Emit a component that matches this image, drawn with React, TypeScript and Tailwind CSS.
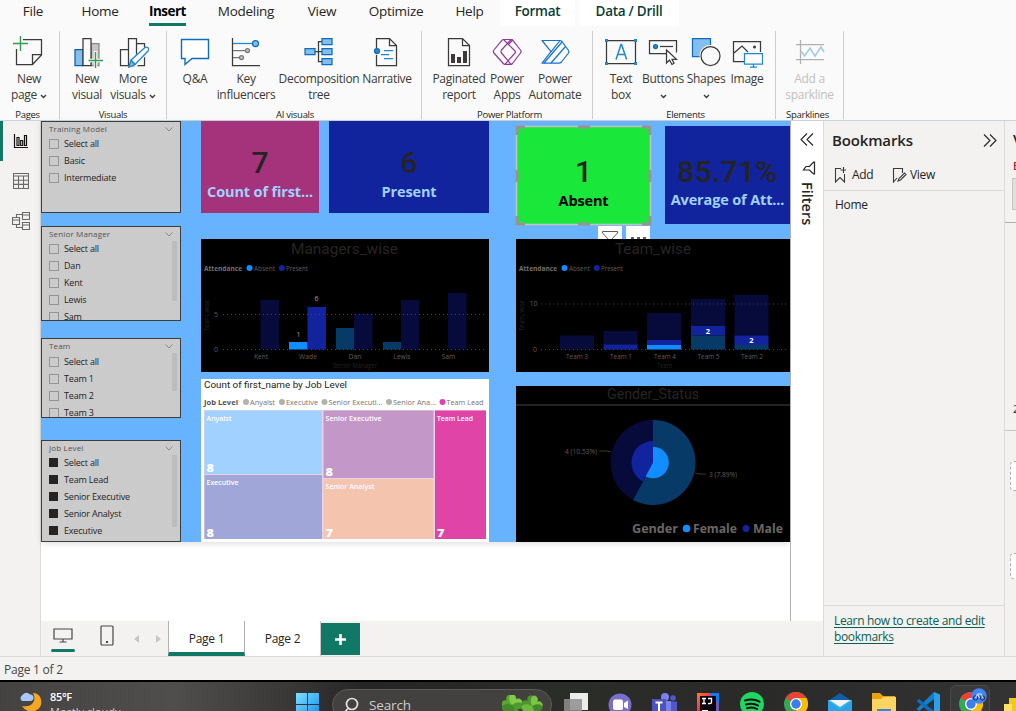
import React from "react";
import type { ReactNode } from "react";

const SANS = "'Open Sans', 'Noto Sans', sans-serif";
const DIN = "Roboto, 'Open Sans', sans-serif";

/* ---------- Shared chart text ---------- */

type LabelProps = {
  x: number;
  y: number;
  w?: number;
  size: number;
  fill: string;
  weight?: number;
  font?: string;
  anchor?: "start" | "middle" | "end";
  children: string;
};

function Label({ x, y, w, size, fill, weight = 400, font = SANS, anchor = "start", children }: LabelProps) {
  return (
    <text
      x={x}
      y={y}
      fontSize={size}
      fill={fill}
      fontWeight={weight}
      fontFamily={font}
      textAnchor={anchor}
      textLength={w}
      lengthAdjust="spacingAndGlyphs"
    >
      {children}
    </text>
  );
}

function ChevronDown({ className = "" }: { className?: string }) {
  return (
    <svg width="7" height="5" viewBox="0 0 7 5" className={className} fill="none" stroke="currentColor" strokeWidth="1.4">
      <path d="M1 1l2.5 2.5L6 1" />
    </svg>
  );
}

/* ---------- Ribbon tabs ---------- */

const tabs = [
  { name: "File", cls: "w-[66px]" },
  { name: "Home", cls: "w-[68px]" },
  { name: "Insert", cls: "w-[67px]", active: true },
  { name: "Modeling", cls: "w-[90px]" },
  { name: "View", cls: "w-[62px]" },
  { name: "Optimize", cls: "w-[86px]" },
  { name: "Help", cls: "w-[61px]" },
  { name: "Format", cls: "w-[75px] bg-white font-semibold text-[#0c3b37]" },
  { name: "Data / Drill", cls: "ml-1 w-[100px] bg-white font-semibold text-[#0c3b37]" },
];

function TabBar() {
  return (
    <nav className="flex h-[26px] shrink-0 text-[13.5px] leading-[23px] tracking-[-0.02em] text-[#252423]">
      {tabs.map((t) => (
        <div key={t.name} className={`flex flex-col items-center ${t.cls}`}>
          <span className={t.active ? "h-[26px] border-b-3 border-[#117865] font-bold tracking-[-0.04em] text-black" : ""}>{t.name}</span>
        </div>
      ))}
    </nav>
  );
}

/* ---------- Ribbon icons ---------- */

const ink = "#3b3a39";
const blue = "#0f6cbd";
const pale = "#83beec";
const grey = "#c8c6c4";

function Icon({ children, w = 32 }: { children: ReactNode; w?: number }) {
  return (
    <svg width={w} height="34" viewBox={`0 0 ${w} 34`} fill="none" stroke={ink} strokeWidth="1.25" className="shrink-0">
      {children}
    </svg>
  );
}

const icons = {
  newPage: (
    <Icon>
      <path d="M10 5.500h18.500v15.500L19.500 30.500H3.500V15M28.500 20.500h-9v10" />
      <path d="M7.500 2v15M0 9.500h15" stroke="#2f9e4c" strokeWidth="1.4" />
    </Icon>
  ),
  newVisual: (
    <Icon>
      <path d="M4 15.500h8v16H4z" fill={pale} stroke="#0f5ea8" />
      <path d="M20 9.500h8v22h-8z" fill={grey} stroke="#8a8886" />
      <path d="M12 4.500h8v27h-8z" fill="#fafafa" />
      <path d="M24.500 17v19M16 26.500h17" stroke="#fafafa" strokeWidth="3.500" />
      <path d="M24.500 18v16M17.500 26.500h15" stroke="#2f9e4c" strokeWidth="1.4" />
    </Icon>
  ),
  moreVisuals: (
    <Icon>
      <path d="M3.500 15.500h8v16h-8zM11.500 4.500h8v27h-8zM19.500 9.500h8v22h-8z" />
      <path d="M29 15 16 31" stroke="#fafafa" strokeWidth="8" />
      <path d="M14 26 27.500 14c3-2.200 5.500.8 3.300 3.300L18 30.500l-6 2.500z" fill="#fafafa" stroke="#1f86d0" />
      <path d="M14 26.500l-2 6.500 6-2.500z" fill={pale} stroke="#1f86d0" />
      <path d="M14 26l4 4.500" stroke="#1f86d0" />
    </Icon>
  ),
  qa: (
    <Icon>
      <path d="M2.500 5.500h27v19H13l-7 6v-6H2.500z" stroke={blue} strokeWidth="1.4" fill="#fff" />
    </Icon>
  ),
  key: (
    <Icon>
      <path d="M2.500 4v27.500H30" />
      <path d="M3 9.500h19" stroke="#1f86d0" />
      <path d="M3 16.500h12M3 23.500h7" stroke="#797775" />
      <circle cx="25.500" cy="9.500" r="3" fill={pale} stroke={blue} />
      <circle cx="17.500" cy="16.500" r="2" fill={grey} stroke="#797775" />
      <circle cx="11.500" cy="23.500" r="2" fill={grey} stroke="#797775" />
    </Icon>
  ),
  tree: (
    <Icon>
      <path d="M12 17.500h8M19 7.500h-3.500v20H19" />
      <path d="M2 14.500h10v6H2zM19 4.500h10v6H19zM19 14.500h10v6H19zM19 24.500h10v6H19z" fill={pale} stroke={blue} />
    </Icon>
  ),
  narrative: (
    <Icon>
      <path d="M5.500 14V4.500h13l7 7v20h-20V21M18.500 4.500v7h7" />
      <circle cx="6" cy="17" r="2.500" fill="#2a8ad4" stroke={blue} />
      <path d="M13 16.500h9M10 20.500h8M13 24.500h9" stroke="#1f86d0" />
    </Icon>
  ),
  paginated: (
    <Icon>
      <path d="M5.500 4.500h14l7 7v20h-21zM19.500 4.500v7h7" />
      <path d="M8 20h4v9H8zM14 23h4v6h-4zM20 17h4v12h-4z" fill={ink} stroke="none" />
    </Icon>
  ),
  apps: (
    <Icon>
      <g stroke="#8c3a9c" strokeWidth="1.200" strokeLinejoin="round">
        <path d="M12.500 5.500h7.500q1 0 1.800.8L29.500 16q1.200 1.500 0 3l-8 10.500q-.7.800-1.500.8h-6q-1 0-1.700-.8L2.900 19q-1.200-1.500 0-3l8-9.700q.7-.8 1.600-.8z" />
        <path d="M12.500 5.500 24 17q1 1 0 2L14 30.300M20 5.500 10.500 16q-1 1.500 0 3L20 30.300M17 11l5-5.500" />
      </g>
    </Icon>
  ),
  automate: (
    <Icon>
      <g stroke="#1272cf" strokeWidth="1.200" strokeLinejoin="round">
        <path d="M3 6.500h17.500q1.500 0 2.500 1l6.500 9q1 1.500 0 2.500l-7 9q-1 1.200-2.500 1.200H3l9-11.500z" />
        <path d="M12 17.800 21 6.500M5 29 23 8M12 29 26.500 12.500" />
      </g>
    </Icon>
  ),
  textBox: (
    <Icon>
      <path d="M1.500 6.500h29v23h-29z" />
      <path d="M11 25.500l5-15h.6l5 15M12.800 20.500h7" stroke="#1f86d0" strokeWidth="1.500" />
      <path d="M0 5h3v3H0zM29 5h3v3h-3zM0 28h3v3H0zM29 28h3v3h-3z" fill="#1f86d0" stroke="none" />
    </Icon>
  ),
  buttons: (
    <Icon>
      <path d="M19 19.500H2.500v-13h27v12" />
      <circle cx="8.500" cy="12.500" r="2" fill="#2a8ad4" stroke={blue} />
      <path d="M13 12.500h13" />
      <path d="M19.500 16v13l3-3 2.500 4.500 2-1.200-2-4h4.500z" fill="#fff" />
    </Icon>
  ),
  shapes: (
    <Icon>
      <path d="M2.500 4.500h18v18h-18z" fill={pale} stroke={blue} />
      <circle cx="20.500" cy="22" r="11" fill="#fafafa" stroke="none" />
      <circle cx="20.500" cy="22" r="9.500" fill="#fafafa" />
    </Icon>
  ),
  image: (
    <Icon>
      <path d="M13 27.500H2.500v-20h27V18M3 19l8-7 6 6" />
      <circle cx="23.500" cy="13" r="1.500" fill={ink} stroke="none" />
      <path d="M13.500 19.500h18v10.500h-18zM22.500 30v3M19 33h7" stroke="#1f86d0" fill="#fff" />
    </Icon>
  ),
  sparkline: (
    <Icon>
      <path d="M2 10.500h28M2 25.500h28M6.500 6v24" stroke="#b3b1af" />
      <path d="M7 17l3.500 5 5.500-8 5 8 6-9 3 5" stroke="#a3cbe4" strokeWidth="1.500" />
    </Icon>
  ),
};

/* ---------- Ribbon ---------- */

type Cmd = { icon: ReactNode; a: string; b?: string; chev?: boolean; cls: string };

function Command({ icon, a, b, chev, cls }: Cmd) {
  return (
    <div className={`flex flex-col items-center whitespace-nowrap text-[12px] leading-4 tracking-[-0.025em] ${cls}`}>
      {icon}
      <span className="mt-[3px]">{a}</span>
      <span className="flex h-4 items-center gap-[3px]">
        {b}
        {chev && <ChevronDown className="mt-0.5" />}
      </span>
    </div>
  );
}

const groups: { label: string; cls: string; items: Cmd[] }[] = [
  { label: "Pages", cls: "w-[60px]", items: [{ icon: icons.newPage, a: "New", b: "page", chev: true, cls: "w-[58px]" }] },
  {
    label: "Visuals",
    cls: "w-[107px] pl-1",
    items: [
      { icon: icons.newVisual, a: "New", b: "visual", cls: "w-[46px]" },
      { icon: icons.moreVisuals, a: "More", b: "visuals", chev: true, cls: "w-[46px]" },
    ],
  },
  {
    label: "AI visuals",
    cls: "w-[255px] pl-1.5",
    items: [
      { icon: icons.qa, a: "Q&A", cls: "w-[44px]" },
      { icon: icons.key, a: "Key", b: "influencers", cls: "w-[58px]" },
      { icon: icons.tree, a: "Decomposition", b: "tree", cls: "w-[88px]" },
      { icon: icons.narrative, a: "Narrative", cls: "w-[48px]" },
    ],
  },
  {
    label: "Power Platform",
    cls: "w-[171px] pl-[9px]",
    items: [
      { icon: icons.paginated, a: "Paginated", b: "report", cls: "w-[56px]" },
      { icon: icons.apps, a: "Power", b: "Apps", cls: "w-[40px]" },
      { icon: icons.automate, a: "Power", b: "Automate", cls: "w-[56px]" },
    ],
  },
  {
    label: "Elements",
    cls: "w-[183px] pl-[7px]",
    items: [
      { icon: icons.textBox, a: "Text", b: "box", cls: "w-[42px]" },
      { icon: icons.buttons, a: "Buttons", chev: true, cls: "w-[42px]" },
      { icon: icons.shapes, a: "Shapes", chev: true, cls: "w-[44px]" },
      { icon: icons.image, a: "Image", cls: "w-[38px]" },
    ],
  },
  {
    label: "Sparklines",
    cls: "w-[68px]",
    items: [{ icon: icons.sparkline, a: "Add a", b: "sparkline", cls: "w-[67px] text-[#c2c0be]" }],
  },
];

function Ribbon() {
  return (
    <div className="flex h-[95px] shrink-0 pt-[5px] text-[#3b3a39]">
      {groups.map((g) => (
        <div key={g.label} className={`flex h-[88px] flex-col border-r border-[#d0cecc] ${g.cls}`}>
          <div className="flex h-[77px] shrink-0 pt-[3px]">{g.items.map((it, i) => <Command key={i} {...it} />)}</div>
          <div className="-ml-1 text-center text-[9.5px] leading-[14px] tracking-[-0.03em] text-[#252423]">{g.label}</div>
        </div>
      ))}
    </div>
  );
}

/* ---------- Left rail ---------- */

function Rail() {
  return (
    <aside className="flex w-[41px] shrink-0 flex-col border-r border-[#dddbd9] bg-[#f3f2f1]">
      <div className="flex h-10 items-center border-l-3 border-[#117865] pl-[10px]">
        <svg width="16" height="16" viewBox="0 0 16 16" fill="none" stroke="#111" strokeWidth="1.200">
          <path d="M1.500 1v13.500H15M4 4.500h2v8H4zM7.700 7.500h2v5h-2zM11.500 2.500h2v10h-2z" />
        </svg>
      </div>
      <div className="flex h-10 items-center pl-[13px]">
        <svg width="16" height="16" viewBox="0 0 16 16" fill="none" stroke="#6b6967" strokeWidth="1.100">
          <path d="M.5.500h15v15H.500zM.5 3h15M.5 7.200h15M.5 11.400h15M5.500 3v12.500M10.500 3v12.500" />
        </svg>
      </div>
      <div className="flex h-10 items-center pl-3">
        <svg width="18" height="18" viewBox="0 0 18 18" fill="none" stroke="#6b6967" strokeWidth="1.100">
          <path d="M.5 5.500h7v7h-7zM.5 8h7M10.500.500h7v7h-7zM10.500 3h7M10.500 10.500h7v7h-7zM10.500 13h7M4.500 5.500v-3h6M4.500 12.500v3h6" />
        </svg>
      </div>
    </aside>
  );
}

/* ---------- Slicers ---------- */

type SlicerProps = { title: string; items: string[]; cls: string; head: string; checked?: boolean; thumb?: string };

function Slicer({ title, items, cls, head, checked, thumb }: SlicerProps) {
  return (
    <section className={`relative w-[140px] shrink-0 overflow-hidden border border-[#3d3d3d] bg-[#cbcbcb] pl-[7px] ${cls}`}>
      <div className={`flex items-start justify-between pr-[7px] ${head}`}>
        <span className="text-[8px] leading-[14px] tracking-[0.02em] text-[#55524f]">{title}</span>
        <svg width="8" height="5" viewBox="0 0 8 5" fill="none" stroke="#8a8886" className="mt-[5px]">
          <path d="M.5.500 4 4 7.500.500" />
        </svg>
      </div>
      <ul className="text-[9px] leading-[17px] tracking-[-0.02em] text-[#252423]">
        {items.map((n) => (
          <li key={n} className="flex h-[17px] items-center gap-[5px] whitespace-nowrap">
            <i className={checked ? "size-[9px] bg-[#252423]" : "size-[10px] border border-[#979593]"} />
            <span className={checked ? "pl-px" : ""}>{n}</span>
          </li>
        ))}
      </ul>
      {thumb && <div className={`absolute right-[3px] top-[14px] w-[5px] bg-[#bdbcbb] ${thumb}`} />}
    </section>
  );
}

/* ---------- Cards ---------- */

function Card({ value, label, cls, num = "", text }: { value: string; label: string; cls: string; num?: string; text: string }) {
  return (
    <section className={`flex shrink-0 flex-col items-center overflow-hidden whitespace-nowrap ${cls}`}>
      <div className={`font-[Roboto] text-[30px] font-medium leading-9 text-[#252423] ${num}`}>{value}</div>
      <div className={`text-[14.5px] font-bold leading-5 tracking-[-0.01em] ${text}`}>{label}</div>
    </section>
  );
}

function SelectedFrame() {
  return (
    <svg width="137" height="101" viewBox="0 0 137 101" className="absolute -left-px -top-px" fill="none">
      <rect x="1.500" y="1.500" width="134" height="98" stroke="#c4c2c0" strokeWidth="1.500" />
      <path
        d="M2 10V2h8M127 2h8v8M135 91v8h-8M10 99H2v-8M63 2h12M63 99h12M2 45v12M135 45v12"
        stroke="#969492"
        strokeWidth="3"
      />
    </svg>
  );
}

/* ---------- Charts ---------- */

const NAVY = "#060b3c";
const TEAL = "#083a68";
const BRIGHT = "#118dff";
const ROYAL = "#12239e";
const DIM = "#605c59";

function Legend({ x }: { x: number }) {
  return (
    <g>
      <Label x={x} y={271} w={38} size={7} fill="#76716d" weight={700}>Attendance</Label>
      <circle cx={x + 45.5} cy={268} r={3} fill={BRIGHT} />
      <Label x={x + 50} y={271} w={21} size={7} fill={DIM}>Absent</Label>
      <circle cx={x + 77.8} cy={268} r={3} fill={ROYAL} />
      <Label x={x + 82} y={271} w={22} size={7} fill={DIM}>Present</Label>
    </g>
  );
}

function ManagersChart() {
  const bars: [number, number, string][] = [
    [260.5, 300, NAVY], [289, 342, BRIGHT], [307.500, 307, ROYAL], [336, 328, TEAL], [354, 314, NAVY],
    [383, 342, TEAL], [401, 300, NAVY], [448, 293, NAVY],
  ];
  const cats: [string, number, number][] = [["Kent", 261, 14], ["Wade", 308, 18], ["Dan", 355, 13], ["Lewis", 402, 17], ["Sam", 448.5, 14]];
  return (
    <svg width="288" height="133" viewBox="201 239 288 133" className="block shrink-0 bg-black">
      <Label x={291} y={253.900} w={107} size={14.200} fill="#272523" font={DIN}>Managers_wise</Label>
      <Legend x={204} />
      {bars.map(([x, y, c]) => <rect key={x} x={x} y={y} width={18.500} height={349.500 - y} fill={c} />)}
      <path d="M223 314.500h262M223 349.500h262" stroke="#494644" strokeDasharray="1 3" />
      <Label x={214} y={316.500} size={7} fill={DIM}>5</Label>
      <Label x={214} y={352} size={7} fill={DIM}>0</Label>
      <Label x={298.500} y={337} size={7} fill="#a5a19e" anchor="middle">1</Label>
      <Label x={316.500} y={301} size={7} fill="#a5a19e" anchor="middle">6</Label>
      {cats.map(([n, x, w]) => <Label key={n} x={x} y={359} w={w} size={7} fill={DIM} anchor="middle">{n}</Label>)}
      <Label x={333} y={368} w={44} size={6.500} fill="#262422">Senior Manager</Label>
      <g transform="rotate(-90 209 331)"><Label x={209} y={331} w={31} size={6.500} fill="#262422">Team_wise</Label></g>
    </svg>
  );
}

function TeamChart() {
  const bars: [number, number, number, string][] = [
    [560, 335.5, 349.5, NAVY], [603.5, 331, 344.5, NAVY], [603.5, 344.5, 349.5, ROYAL],
    [647, 313, 340, NAVY], [647, 340, 345, ROYAL], [647, 345, 349.5, BRIGHT],
    [691, 299, 326, NAVY], [691, 326, 335.5, ROYAL], [691, 335.5, 349.5, TEAL],
    [734.500, 295, 335.5, NAVY], [734.500, 335.5, 345, ROYAL], [734.500, 345, 349.5, TEAL],
  ];
  const cats: [string, number][] = [["Team 3", 577], ["Team 1", 621], ["Team 4", 665], ["Team 5", 708.5], ["Team 2", 752]];
  return (
    <svg width="274" height="133" viewBox="516 239 274 133" className="block shrink-0 bg-black">
      <Label x={615} y={253.900} w={76} size={14.200} fill="#272523" font={DIN}>Team_wise</Label>
      <Legend x={519} />
      {bars.map(([x, a, b, c], i) => <rect key={i} x={x} y={a} width={34} height={b - a} fill={c} />)}
      <path d="M541 304h245M541 349.500h245" stroke="#494644" strokeDasharray="1 3" />
      <Label x={529.500} y={306} size={7} fill={DIM}>10</Label>
      <Label x={533} y={352} size={7} fill={DIM}>0</Label>
      <Label x={708} y={334} size={7.500} fill="#fff" weight={700} anchor="middle">2</Label>
      <Label x={751.500} y={343} size={7.500} fill="#fff" weight={700} anchor="middle">2</Label>
      {cats.map(([n, x]) => <Label key={n} x={x} y={359} w={22} size={7} fill={DIM} anchor="middle">{n}</Label>)}
      <Label x={657} y={368} w={15} size={6.500} fill="#262422">Team</Label>
      <g transform="rotate(-90 524 331)"><Label x={524} y={331} w={31} size={6.500} fill="#262422">Team_wise</Label></g>
    </svg>
  );
}

function slice(r: number, female: boolean) {
  const a = (208 * Math.PI) / 180;
  const ex = 653 + r * Math.sin(a);
  const ey = 462.5 - r * Math.cos(a);
  return female
    ? `M653 462.5V${462.5 - r}A${r} ${r} 0 1 1 ${ex} ${ey}Z`
    : `M653 462.5L${ex} ${ey}A${r} ${r} 0 0 1 653 ${462.5 - r}Z`;
}

function GenderChart() {
  return (
    <svg width="274" height="156" viewBox="516 386 274 156" className="block shrink-0 bg-black">
      <Label x={607} y={399} w={92} size={14.200} fill="#272523" font={DIN}>Gender_Status</Label>
      <path d="M516 405h274" stroke="#222" strokeWidth="2" />
      <path d={slice(42.500, true)} fill={TEAL} />
      <path d={slice(42.500, false)} fill={NAVY} />
      <path d={slice(21.500, false)} fill={ROYAL} />
      <path d={slice(15.800, true)} fill={BRIGHT} />
      <path d="M599 451h8l4 1M695 473l4 1h7" stroke="#3a3836" fill="none" />
      <Label x={565} y={454} w={32} size={7} fill={DIM}>4 (10.53%)</Label>
      <Label x={709} y={477} w={28} size={7} fill={DIM}>3 (7.89%)</Label>
      <Label x={632} y={533} w={46} size={13} fill="#6a6663" weight={700}>Gender</Label>
      <circle cx={686.500} cy={528.500} r={3.800} fill={BRIGHT} />
      <Label x={693} y={533} w={44} size={13} fill="#6a6663" weight={700}>Female</Label>
      <circle cx={746} cy={528.500} r={3.500} fill={ROYAL} />
      <Label x={753} y={533} w={30} size={13} fill="#6a6663" weight={700}>Male</Label>
    </svg>
  );
}

function Treemap() {
  const cells: [string, number, number, number, number, number, string, number, string][] = [
    ["Anyalst", 204, 410, 118, 64, 25, "#a0d1ff", 8, "a"],
    ["Executive", 204, 474.500, 118, 64.500, 32, "#a0a7d8", 8, "b"],
    ["Senior Executive", 323, 410, 110.500, 68, 56, "#c497c9", 8, "c"],
    ["Senior Analyst", 323, 478.500, 110.500, 60.500, 49, "#f5c4af", 7, "d"],
    ["Team Lead", 434.500, 410, 51.500, 129, 36, "#e044a7", 7, "e"],
  ];
  const legend: [string, number, number][] = [
    ["Anyalst", 250, 25], ["Executive", 286, 32], ["Senior Executi...", 328.5, 54], ["Senior Ana...", 393, 43], ["Team Lead", 446.5, 37],
  ];
  return (
    <svg width="288" height="163" viewBox="201 379 288 163" className="block shrink-0 bg-white">
      <Label x={204} y={388} w={143} size={9.500} fill="#252423" font={DIN}>Count of first_name by Job Level</Label>
      <Label x={204} y={405} w={34} size={7.500} fill="#55524f" weight={700}>Job Level</Label>
      {legend.map(([n, x, w], i) => (
        <g key={n}>
          <circle cx={x - 4} cy={402} r={3} fill={i === 4 ? "#e044a7" : "#b3b0ad"} />
          <Label x={x} y={405} w={w} size={7.500} fill="#77736f">{n}</Label>
        </g>
      ))}
      <rect x="204" y="410" width="282" height="129" fill="#e8d3ea" />
      {cells.map(([n, x, y, w, h, tw, c, v, k]) => (
        <g key={k}>
          <rect x={x + 0.5} y={y + 0.5} width={w - 0.5} height={h - 0.5} fill={c} />
          <Label x={x + 2.500} y={y + 10.700} w={tw} size={7.500} fill="#fff" weight={600}>{n}</Label>
          <Label x={x + 2.500} y={y + h - 2.500} w={7.500} size={11} fill="#fff" weight={800}>{String(v)}</Label>
        </g>
      ))}
    </svg>
  );
}

/* ---------- Report canvas ---------- */

function Report() {
  return (
    <div className="flex h-[421px] shrink-0 bg-[#68b3ff] shadow-[0_2px_6px_#0000001f]">
      <div className="flex w-[140px] flex-col">
        <Slicer title="Training Model" items={["Select all", "Basic", "Intermediate"]} cls="h-[92px]" head="h-[13px]" />
        <Slicer title="Senior Manager" items={["Select all", "Dan", "Kent", "Lewis", "Sam"]} cls="mt-[13px] h-[95px]" head="h-[13px]" thumb="h-[60px]" />
        <Slicer title="Team" items={["Select all", "Team 1", "Team 2", "Team 3"]} cls="mt-[17px] h-[80px]" head="h-[14px]" thumb="h-[38px]" />
        <Slicer title="Job Level" items={["Select all", "Team Lead", "Senior Executive", "Senior Analyst", "Executive"]} cls="mt-[22px] h-[102px]" head="h-[13px]" checked thumb="h-[72px]" />
      </div>
      <div className="ml-5 flex w-[288px] flex-col">
        <div className="flex justify-between">
          <Card value="7" label="Count of first..." cls="h-[92px] w-[118px] bg-[#a4337b] pt-6" text="mt-px text-[#a0d1ff]" />
          <Card value="6" label="Present" cls="h-[92px] w-[160px] bg-[#12239e] pt-6" text="mt-px text-[#a0d1ff]" />
        </div>
        <div className="mt-[26px]"><ManagersChart /></div>
        <div className="mt-[7px]"><Treemap /></div>
      </div>
      <div className="ml-[27px] flex w-[274px] flex-col">
        <div className="flex justify-between pt-[5px]">
          <div className="relative">
            <Card value="1" label="Absent" cls="h-[99px] w-[135px] bg-[#19e73a] pt-7" text="mt-px text-black" />
            <SelectedFrame />
          </div>
          <Card value="85.71%" label="Average of Att..." cls="h-[98px] w-[125px] bg-[#12239e] pt-7" num="tracking-[0.01em]" text="mt-0 text-[#a0d1ff]" />
        </div>
        <div className="flex h-[14px] gap-1 pl-[82px] pt-px">
          <div className="flex w-6 justify-center overflow-hidden bg-white">
            <svg width="18" height="14" viewBox="0 0 18 14" fill="none" stroke="#605e5c"><path d="M1.500 5.500h15v1.500l-6 6.500M1.500 5.500V7l6 6.500" /></svg>
          </div>
          <div className="flex w-6 items-end justify-center gap-[3px] bg-white">
            <i className="h-[2px] w-[3px] bg-[#605e5c]" /><i className="h-[2px] w-[3px] bg-[#605e5c]" /><i className="h-[2px] w-[3px] bg-[#605e5c]" />
          </div>
        </div>
        <TeamChart />
        <div className="mt-[14px]"><GenderChart /></div>
      </div>
    </div>
  );
}

/* ---------- Right panes ---------- */

function FiltersPane() {
  return (
    <aside className="flex w-[33px] shrink-0 flex-col items-center border-l border-[#b3b0ad] bg-white pt-[12px]">
      <svg width="14" height="13" viewBox="0 0 14 13" fill="none" stroke="#252423" strokeWidth="1.100"><path d="M7 .5l-6 6 6 6M13 .5l-6 6 6 6" /></svg>
      <svg width="14" height="14" viewBox="0 0 14 14" fill="none" stroke="#252423" strokeWidth="1.200" className="mt-[15px] ml-1"><path d="M12.500 1v12h-1L7.500 9H1.500L4 5.500h3.500l4-4.500z" /></svg>
      <span className="mt-[7px] text-[14.5px] font-semibold leading-4 tracking-[0] text-[#252423] [writing-mode:vertical-rl]">Filters</span>
    </aside>
  );
}

function BookmarkIcon({ edit }: { edit?: boolean }) {
  return (
    <svg width={edit ? 15 : 12} height="16" viewBox={edit ? "0 0 15 16" : "0 0 12 16"} fill="none" stroke="#3b3a39" strokeWidth="1.100">
      {edit ? <path d="M5 11 1.500 15V1.500h9V6M14 7.500l-5.500 5.500-2.500 1 1-2.500L12.500 6z" /> : <path d="M7 1.500H1.500V15L6 10.500l4.500 4.500V7M9.500 0v6M6.500 3h5.500" />}
    </svg>
  );
}

function BookmarksPane() {
  return (
    <aside className="flex w-[182px] shrink-0 flex-col border-x border-[#dddbd9] bg-[#f3f2f1] text-[12px] tracking-[-0.025em] text-[#252423]">
      <div className="flex h-10 items-center justify-between pb-[2px] pl-2 pr-[7px]">
        <h2 className="text-[15px] font-semibold tracking-[-0.01em]">Bookmarks</h2>
        <svg width="14" height="13" viewBox="0 0 14 13" fill="none" stroke="#252423" strokeWidth="1.100"><path d="M1 .5l6 6-6 6M7 .5l6 6-6 6" /></svg>
      </div>
      <div className="flex h-[30px] items-center border-b border-[#dddbd9] pb-[2px] pl-[10px]">
        <BookmarkIcon /><span className="ml-[6px] w-[40px]">Add</span>
        <BookmarkIcon edit /><span className="ml-[3px]">View</span>
      </div>
      <div className="flex-1 pl-[11px] pt-[5px] leading-[18px]">Home</div>
      <div className="h-[51px] border-t border-[#dddbd9] pl-[10px] pt-[7px] leading-4 tracking-[-0.03em]">
        <a className="text-[#0c5e52] underline underline-offset-2">Learn how to create and edit<br />bookmarks</a>
      </div>
    </aside>
  );
}

function EdgePane() {
  return (
    <aside className="flex w-[11px] shrink-0 flex-col overflow-hidden bg-[#f3f2f1] pl-[8px]">
      <span className="mt-[8px] text-[15px] font-semibold leading-5 text-[#252423]">V</span>
      <span className="mt-[9px] text-[11px] font-semibold leading-4 text-[#a4262c]">B</span>
      <i className="-ml-px mt-[4px] h-8 w-4 shrink-0 border border-[#c8c6c4] bg-[#e1dfdd]" />
      <i className="-ml-2 mt-[12px] h-px w-5 shrink-0 bg-[#b3b0ad]" />
      <span className="mt-[178px] text-[11px] leading-4 text-[#252423]">2</span>
      <i className="-ml-2 mt-[13px] h-px w-5 shrink-0 bg-[#c8c6c4]" />
      <i className="-ml-[3px] mt-[30px] h-[30px] w-5 shrink-0 rounded-sm border border-dashed border-[#b3b0ad] bg-white" />
      <i className="-ml-[3px] mt-[62px] h-[26px] w-5 shrink-0 rounded-sm border border-dashed border-[#b3b0ad] bg-white" />
    </aside>
  );
}

/* ---------- Page tabs and status ---------- */

function PageTabs() {
  return (
    <div className="flex h-[35px] shrink-0 bg-[#f3f2f1] text-[12px] leading-[35px] tracking-[-0.02em] text-[#252423]">
      <div className="flex w-[127px] items-start pl-[10px]">
        <div className="flex w-6 flex-col items-center pt-[7px]">
          <svg width="20" height="15" viewBox="0 0 20 15" fill="none" stroke="#484644" strokeWidth="1.200"><path d="M1 1h18v10H1zM10 11v3M6.500 14h7" /></svg>
          <i className="mt-[6px] h-[3px] w-6 rounded bg-[#117865]" />
        </div>
        <svg width="14" height="21" viewBox="0 0 14 21" fill="none" stroke="#484644" strokeWidth="1.200" className="ml-[25px] mt-[4px]"><rect x="1" y="1" width="12" height="19" rx="1" /><path d="M6 17h2" strokeWidth="1.800" /></svg>
        <svg width="5" height="8" viewBox="0 0 5 8" fill="#c8c6c4" className="ml-[20px] mt-[14px]"><path d="M5 0v8L0 4z" /></svg>
        <svg width="5" height="8" viewBox="0 0 5 8" fill="#c8c6c4" className="ml-[17px] mt-[14px]"><path d="M0 0v8l5-4z" /></svg>
      </div>
      <div className="flex w-[77px] justify-center border-x border-b-4 border-x-[#b3b0ad] border-b-[#117865] bg-white">Page 1</div>
      <div className="flex w-[76px] justify-center border-r border-[#c8c6c4] bg-white">Page 2</div>
      <div className="mt-[2px] flex h-8 w-[39px] items-center justify-center bg-[#117865]">
        <svg width="11" height="11" viewBox="0 0 11 11" stroke="#fff" strokeWidth="2.600"><path d="M5.500 0v11M0 5.500h11" /></svg>
      </div>
    </div>
  );
}

/* ---------- Taskbar ---------- */

function Tile({ cls, children }: { cls: string; children: ReactNode }) {
  return (
    <svg width="26" height="24" viewBox="0 0 26 24" className={`shrink-0 ${cls}`}>
      {children}
    </svg>
  );
}

function ChromeMark() {
  return (
    <g>
      <circle cx="13" cy="12" r="12" fill="#34a853" />
      <path d="M13 12 2.600 6A12 12 0 0 1 23.400 6z" fill="#ea4335" />
      <path d="M13 12V6h10.400A12 12 0 0 1 13 24z" fill="#fbbc04" />
      <circle cx="13" cy="12" r="6" fill="#fff" />
      <circle cx="13" cy="12" r="4.700" fill="#3b7ded" />
    </g>
  );
}

function Clover({ x, y, r, fill }: { x: number; y: number; r: number; fill: string }) {
  return (
    <g transform={`translate(${x} ${y}) rotate(${r})`} fill={fill}>
      <path d="M0 0C-8-2-9-9-4.500-9.500-2-10 0-8 0-6.500 0-8 2-10 4.500-9.500 9-9 8-2 0 0z" />
    </g>
  );
}

function Taskbar() {
  return (
    <footer className="flex h-[31px] shrink-0 overflow-hidden border-t-2 border-black bg-[linear-gradient(90deg,#454341_0%,#504e4d_17%,#3a3938_28%,#262525_36%,#2b2d28_55%,#2a2a29_75%,#343334_100%)]">
      <div className="flex w-[296px] shrink-0 pl-[18px]">
        <svg width="26" height="24" viewBox="0 0 26 24" className="mt-[9px]">
          <path d="M15 2c8 0 10 9 7 14-4 6-14 6-18-1 10 2 15-5 11-13z" fill="#f5a623" />
          <path d="M4 10a3.500 3.500 0 0 1 .5-6A4.500 4.500 0 0 1 12 3.500 3.300 3.300 0 0 1 13 10z" fill="#a9c8f5" />
        </svg>
        <div className="ml-[6px] flex flex-col whitespace-nowrap pt-[7px] text-[11px] leading-4 text-white">
          <span className="font-semibold tracking-[-0.03em]">85°F</span>
          <span className="-mt-px text-[#c9c8c7]">Mostly cloudy</span>
        </div>
      </div>
      <svg width="24" height="24" viewBox="0 0 24 24" className="mt-[11px] shrink-0">
        <defs><linearGradient id="win" x1="0" y1="0" x2="1" y2="1"><stop offset="0" stopColor="#7fe0ff" /><stop offset="1" stopColor="#0a8ff0" /></linearGradient></defs>
        <path d="M0 0h11v11H0zM12 0h11v11H12zM0 12h11v12H0zM12 12h11v12H12z" fill="url(#win)" />
      </svg>
      <div className="ml-[12px] mt-[7px] flex h-8 w-[220px] shrink-0 rounded-full border border-[#5c5b5a] bg-[#424140] pl-[11px]">
        <svg width="16" height="17" viewBox="0 0 16 17" fill="none" stroke="#e4e3e2" strokeWidth="1.700" className="mt-[7px]"><circle cx="8" cy="7" r="5.500" /><path d="M4 11.500 0 16" /></svg>
        <span className="ml-[9px] mt-[6px] w-[133px] text-[13.5px] leading-[18px] tracking-[-0.01em] text-[#cfcecd]">Search</span>
        <svg width="42" height="22" viewBox="0 0 42 22" className="mt-[5px]">
          <Clover x={10} y={10} r={-50} fill="#5aa832" /><Clover x={10} y={10} r={35} fill="#84cc48" /><Clover x={10} y={10} r={125} fill="#4e9c2e" /><Clover x={10} y={10} r={215} fill="#43892a" />
          <Clover x={30} y={11} r={-40} fill="#4a962c" /><Clover x={30} y={11} r={50} fill="#7cc444" /><Clover x={30} y={11} r={135} fill="#43892a" /><Clover x={30} y={11} r={225} fill="#6cba3c" />
        </svg>
      </div>
      <Tile cls="ml-[12px] mt-[11px]"><path d="M6 0h18v17H6z" fill="#ececec" /><path d="M0 6h18v18H0z" fill="#8f8f8f" opacity=".85" /></Tile>
      <Tile cls="ml-[17px] mt-[11px]"><circle cx="13" cy="12" r="11.500" fill="#7a70c8" /><rect x="6" y="6.500" width="10" height="10.500" rx="2" fill="#fff" /><path d="M17 10l4-2.500v8.500l-4-2z" fill="#fff" /></Tile>
      <Tile cls="ml-[19px] mt-[11px]">
        <circle cx="13" cy="4" r="4" fill="#7b83eb" /><circle cx="21" cy="5" r="2.800" fill="#5059c9" /><path d="M8 8h11v16H8z" fill="#7b83eb" /><path d="M19 8.500h6V20h-6z" fill="#5059c9" /><path d="M0 6h14v15H0z" fill="#4b53bc" />
        <path d="M3.500 9.500h7M7 9.500v9" stroke="#fff" strokeWidth="2" />
      </Tile>
      <svg width="22" height="24" viewBox="0 0 22 24" className="ml-[19px] mt-[11px] shrink-0">
        <defs><linearGradient id="ij" x1="0" y1="0" x2="1" y2="1"><stop offset="0" stopColor="#fc801d" /><stop offset=".4" stopColor="#fe2857" /><stop offset="1" stopColor="#087cfa" /></linearGradient></defs>
        <path d="M0 0h22v24H0z" fill="url(#ij)" /><path d="M12 0h10v11z" fill="#087cfa" /><path d="M3 3h16v21H3z" fill="#0b0510" />
        <path d="M5 5.500h4M7 5.500v5M5 10.500h4M11 5.500h3.500v4q0 1.200-3.500 1" fill="none" stroke="#fff" strokeWidth="1.300" /><path d="M5 17.500h6" stroke="#fff" />
      </svg>
      <Tile cls="ml-[20px] mt-[10px]"><circle cx="13" cy="12" r="12" fill="#1ed760" /><path d="M6 8.500q8-2.500 14.500 1.200M7 12.500q7-2 12 1M8 16.200q6-1.500 10 .8" fill="none" stroke="#111" strokeWidth="2" strokeLinecap="round" /></Tile>
      <Tile cls="ml-[18px] mt-[10px]"><ChromeMark /></Tile>
      <Tile cls="ml-[18px] mt-[11px]"><path d="M1 8 13 0l12 8z" fill="#0f5ea8" /><path d="M1 7h24v17H1z" fill="#36b5f0" /><path d="M2.500 7h21L13 14z" fill="#f4f4f4" /><path d="M1 8l12 8 12-8v16H1z" fill="#2ba3e8" /></Tile>
      <Tile cls="ml-[18px] mt-[11px]"><path d="M1 0h8l3 3h12v6H1z" fill="#e8a410" /><path d="M1 6h9l2-2h13v20H1z" fill="#fcd462" /><path d="M6 16h14v8H6z" fill="#2a8ad4" /></Tile>
      <Tile cls="ml-[18px] mt-[10px]"><path d="M19 0 25 2.500V24h-6z" fill="#2d9fe8" /><path d="M19 0v7L4 19l-2.500-2z" fill="#1180d0" /><path d="M1.500 9 4 7l15 12v5z" fill="#0c6fbe" /></Tile>
      <div className="ml-[9px] mt-[3px] flex h-8 w-10 shrink-0 rounded-md border border-[#4b4a4a] bg-[#3b3a3a] pl-[7px]">
        <svg width="31" height="30" viewBox="0 0 31 30" className="shrink-0">
          <g transform="translate(0 6)"><ChromeMark /></g>
          <circle cx="21" cy="10" r="7.700" fill="#4286f5" />
          <circle cx="17.500" cy="12" r="2.200" fill="none" stroke="#1d2d50" /><circle cx="24.500" cy="12" r="2.200" fill="none" stroke="#1d2d50" /><path d="M17.500 12l2-4h4l1 4M19.500 8l2 4" fill="none" stroke="#dfe8fa" />
        </svg>
      </div>
      <svg width="12" height="24" viewBox="0 0 12 24" className="ml-[14px] mt-[11px] shrink-0"><path d="M5 5h7v19H5z" fill="#f2c811" /><path d="M0 11h8v13H0z" fill="#fbe06a" /></svg>
    </footer>
  );
}

export default function App() {
  return (
    <div className="flex h-[711px] w-[1016px] flex-col overflow-hidden bg-[#fafafa] font-['Open_Sans','Noto_Sans',sans-serif]">
      <TabBar />
      <Ribbon />
      <div className="-mt-px box-content flex h-[535px] shrink-0 border-t border-[#c9d3dc]">
        <Rail />
        <div className="flex w-[782px] shrink-0 flex-col">
          <div className="flex h-[500px] shrink-0">
            <div className="flex w-[749px] flex-col bg-white"><Report /></div>
            <FiltersPane />
          </div>
          <PageTabs />
        </div>
        <BookmarksPane />
        <EdgePane />
      </div>
      <div className="h-6 shrink-0 border-t border-[#dddbd9] bg-[#f3f2f1] pl-1 text-[12px] leading-[25px] tracking-[-0.02em] text-[#484644]">Page 1 of 2</div>
      <Taskbar />
    </div>
  );
}
